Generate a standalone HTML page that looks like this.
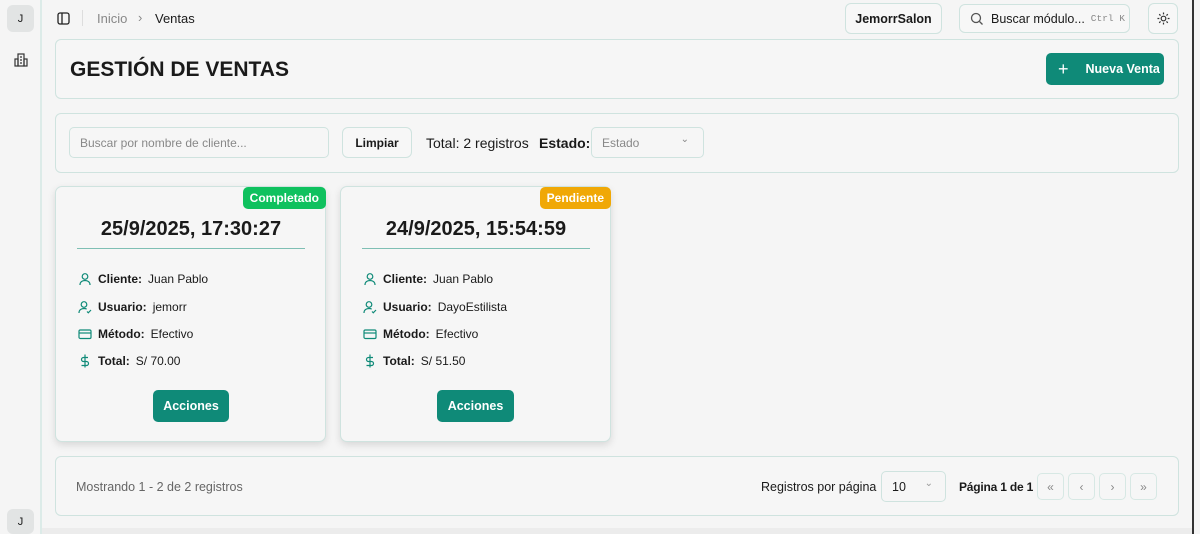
<!DOCTYPE html><html><head><meta charset="utf-8"><style>
*{box-sizing:border-box;margin:0;padding:0}
body{width:1200px;height:534px;overflow:hidden;background:#f5f5f5;font-family:"Liberation Sans",sans-serif;color:#1a1a1a;position:relative;font-size:13px}
.abs{position:absolute;white-space:nowrap}
.box{position:absolute;border:1px solid #cfe3df;border-radius:6px;background:#f6f6f6}
.btn{position:absolute;border:1px solid #cfe3df;border-radius:6px;background:#f7f7f7;display:flex;align-items:center;justify-content:center;font-weight:bold;font-size:12.5px;white-space:nowrap}
.green{background:#0f8a78;color:#fff;border-radius:5px;position:absolute;display:flex;align-items:center;justify-content:center;font-weight:bold;font-size:12.5px;white-space:nowrap}
.card{position:absolute;top:186px;width:271px;height:256px;border:1px solid #cfe3df;border-radius:7px;background:#f6f6f6;box-shadow:0 3px 8px rgba(0,0,0,.12)}
.row{position:absolute;left:22px;font-size:12px;display:flex;align-items:center;white-space:nowrap}
.row b{margin:0 6px 0 6px}
.row svg{width:14px;height:14px}
.pg{position:absolute;top:473px;width:27px;height:27px;border:1px solid #d7e8e4;border-radius:5px;color:#888;font-size:12px;display:flex;align-items:center;justify-content:center}
</style></head><body>
<div class="abs" style="left:0;top:0;width:42px;height:534px;border-right:2px solid #dcebe8;background:#f5f5f5"></div>
<div class="abs" style="left:7px;top:5px;width:27px;height:27px;border-radius:6px;background:#e2e4e4;font-size:11px;display:flex;align-items:center;justify-content:center">J</div>
<div class="abs" style="left:7px;top:509px;width:27px;height:25px;border-radius:6px;background:#e2e4e4;font-size:11px;display:flex;align-items:center;justify-content:center">J</div>
<svg class="abs" style="left:14px;top:53px" width="14" height="14" viewBox="0 0 14 14" fill="none" stroke="#333" stroke-width="1.2"><rect x="4" y="1" width="6" height="12"/><rect x="1" y="6" width="3" height="7"/><rect x="10" y="6" width="3" height="7"/><path d="M6 4h2M6 7h2M6 10h2"/></svg>
<svg class="abs" style="left:57px;top:12px" width="13" height="13" viewBox="0 0 13 13" fill="none" stroke="#222" stroke-width="1.3"><rect x="1" y="1" width="11" height="11" rx="2"/><path d="M5 1v11"/></svg>
<div class="abs" style="left:82px;top:10px;width:1px;height:16px;background:#ddd"></div>
<div class="abs" style="left:97px;top:11px;font-size:13px;color:#888">Inicio</div>
<div class="abs" style="left:138px;top:10px;font-size:13px;color:#888">›</div>
<div class="abs" style="left:155px;top:11px;font-size:13px">Ventas</div>
<div class="btn" style="left:845px;top:3px;width:97px;height:31px">JemorrSalon</div>
<div class="btn" style="left:959px;top:4px;width:171px;height:29px;font-weight:normal;justify-content:flex-start;padding-left:10px"><svg width="14" height="14" viewBox="0 0 14 14" fill="none" stroke="#555" stroke-width="1.3"><circle cx="6" cy="6" r="4.5"/><path d="M9.5 9.5l3 3"/></svg><span style="margin-left:7px;font-size:12.5px">Buscar módulo...</span><span style="font-family:'Liberation Mono',monospace;font-size:9.5px;color:#888;margin-left:6px">Ctrl K</span></div>
<div class="btn" style="left:1148px;top:3px;width:30px;height:31px"><svg width="13" height="13" viewBox="0 0 14 14" fill="none" stroke="#333" stroke-width="1.3"><circle cx="7" cy="7" r="2.5"/><path d="M7 0.5v2M7 11.5v2M0.5 7h2M11.5 7h2M2.4 2.4l1.4 1.4M10.2 10.2l1.4 1.4M2.4 11.6l1.4-1.4M10.2 3.8l1.4-1.4"/></svg></div>
<div class="abs" style="left:1192px;top:0;width:2px;height:534px;background:#333"></div>
<div class="box" style="left:55px;top:39px;width:1124px;height:60px"></div>
<div class="abs" style="left:70px;top:58px;font-size:21px;font-weight:bold">GESTIÓN DE VENTAS</div>
<div class="green" style="left:1046px;top:53px;width:118px;height:32px;justify-content:flex-start;padding-left:12px"><span style="font-size:18px;font-weight:normal;margin-right:17px">+</span>Nueva Venta</div>
<div class="box" style="left:55px;top:113px;width:1124px;height:60px"></div>
<div class="abs" style="left:69px;top:127px;width:260px;height:31px;border:1px solid #cfe3df;border-radius:5px;font-size:12px;color:#888;padding:8px 10px">Buscar por nombre de cliente...</div>
<div class="btn" style="left:342px;top:127px;width:70px;height:31px;font-size:12px">Limpiar</div>
<div class="abs" style="left:426px;top:135px;font-size:14px">Total: 2 registros</div>
<div class="abs" style="left:539px;top:135px;font-size:14px;font-weight:bold">Estado:</div>
<div class="abs" style="left:591px;top:127px;width:113px;height:31px;border:1px solid #cfe3df;border-radius:5px;font-size:12px;color:#888;padding:8px 10px">Estado<span style="position:absolute;right:14px;top:6px;font-size:10px">⌄</span></div>

<div class="card" style="left:55px">
<div class="abs" style="right:-1px;top:0;background:#0fc15e;color:#fff;font-weight:bold;font-size:12px;padding:4px 7px;border-radius:5px">Completado</div>
<div class="abs" style="left:0;width:270px;top:31px;text-align:center;font-size:20px;font-weight:bold">25/9/2025, 17:30:27</div>
<div class="abs" style="left:21px;top:61px;width:228px;height:1px;background:#7fbfb4"></div>
<div class="row" style="top:85px"><svg viewBox="0 0 14 14" fill="none" stroke="#0f8a78" stroke-width="1.2"><circle cx="7" cy="4.5" r="2.8"/><path d="M2 13c0-3 2.2-4.5 5-4.5s5 1.5 5 4.5"/></svg><b>Cliente:</b>Juan Pablo</div>
<div class="row" style="top:113px"><svg viewBox="0 0 14 14" fill="none" stroke="#0f8a78" stroke-width="1.2"><circle cx="6" cy="4.5" r="2.8"/><path d="M1 13c0-3 2.2-4.5 5-4.5 1 0 2 .2 2.7.6M9 11.5l1.3 1.3L13 10"/></svg><b>Usuario:</b>jemorr</div>
<div class="row" style="top:140px"><svg viewBox="0 0 14 14" fill="none" stroke="#0f8a78" stroke-width="1.2"><rect x="1" y="3" width="12" height="8.5" rx="1.3"/><path d="M1 6h12"/></svg><b>Método:</b>Efectivo</div>
<div class="row" style="top:167px"><svg viewBox="0 0 14 14" fill="none" stroke="#0f8a78" stroke-width="1.2"><path d="M7 0.5v13M10 3.5H5.5a2 2 0 000 4h3a2 2 0 010 4H3.5"/></svg><b>Total:</b>S/ 70.00</div>
<div class="green" style="left:97px;top:203px;width:76px;height:32px">Acciones</div>
</div>
<div class="card" style="left:340px">
<div class="abs" style="right:-1px;top:0;background:#f0a806;color:#fff;font-weight:bold;font-size:12px;padding:4px 7px;border-radius:5px">Pendiente</div>
<div class="abs" style="left:0;width:270px;top:31px;text-align:center;font-size:20px;font-weight:bold">24/9/2025, 15:54:59</div>
<div class="abs" style="left:21px;top:61px;width:228px;height:1px;background:#7fbfb4"></div>
<div class="row" style="top:85px"><svg viewBox="0 0 14 14" fill="none" stroke="#0f8a78" stroke-width="1.2"><circle cx="7" cy="4.5" r="2.8"/><path d="M2 13c0-3 2.2-4.5 5-4.5s5 1.5 5 4.5"/></svg><b>Cliente:</b>Juan Pablo</div>
<div class="row" style="top:113px"><svg viewBox="0 0 14 14" fill="none" stroke="#0f8a78" stroke-width="1.2"><circle cx="6" cy="4.5" r="2.8"/><path d="M1 13c0-3 2.2-4.5 5-4.5 1 0 2 .2 2.7.6M9 11.5l1.3 1.3L13 10"/></svg><b>Usuario:</b>DayoEstilista</div>
<div class="row" style="top:140px"><svg viewBox="0 0 14 14" fill="none" stroke="#0f8a78" stroke-width="1.2"><rect x="1" y="3" width="12" height="8.5" rx="1.3"/><path d="M1 6h12"/></svg><b>Método:</b>Efectivo</div>
<div class="row" style="top:167px"><svg viewBox="0 0 14 14" fill="none" stroke="#0f8a78" stroke-width="1.2"><path d="M7 0.5v13M10 3.5H5.5a2 2 0 000 4h3a2 2 0 010 4H3.5"/></svg><b>Total:</b>S/ 51.50</div>
<div class="green" style="left:96px;top:203px;width:77px;height:32px">Acciones</div>
</div>

<div class="box" style="left:55px;top:456px;width:1124px;height:60px"></div>
<div class="abs" style="left:76px;top:480px;font-size:12.5px;color:#666">Mostrando 1 - 2 de 2 registros</div>
<div class="abs" style="left:761px;top:480px;font-size:12.5px">Registros por página</div>
<div class="abs" style="left:881px;top:471px;width:65px;height:31px;border:1px solid #cfe3df;border-radius:5px;font-size:12.5px;padding:8px 10px">10<span style="position:absolute;right:12px;top:6px;font-size:10px;color:#999">⌄</span></div>
<div class="abs" style="left:959px;top:480px;font-size:12px;font-weight:bold;letter-spacing:-0.2px">Página 1 de 1</div>
<div class="pg" style="left:1037px">«</div><div class="pg" style="left:1068px">‹</div><div class="pg" style="left:1099px">›</div><div class="pg" style="left:1130px">»</div>
<div class="abs" style="left:42px;top:528px;width:1150px;height:6px;background:#ececec"></div>
</body></html>
